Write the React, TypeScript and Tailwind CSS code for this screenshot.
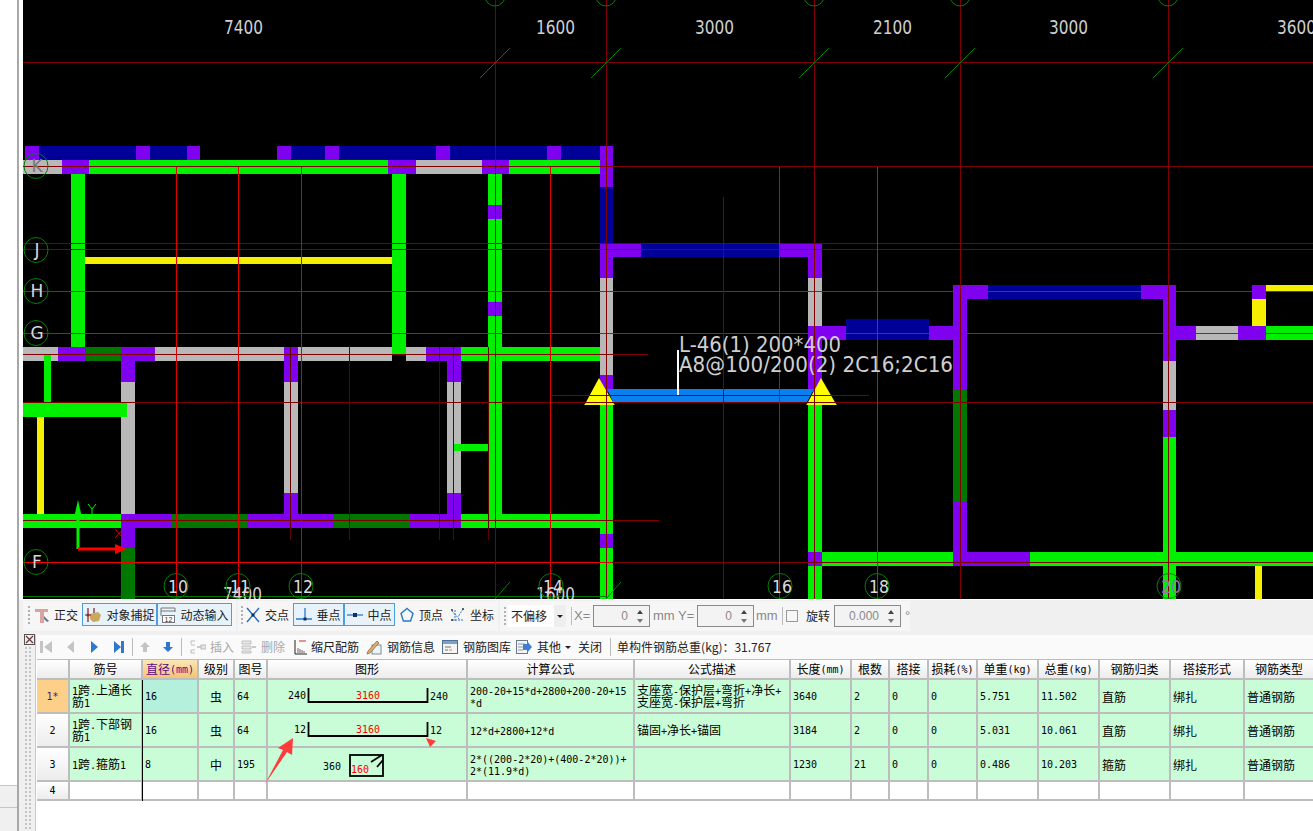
import type { ReactNode } from "react";

const G = "#00f000";
const P = "#8000f0";
const B = "#000099";
const S = "#b8b8b8";
const D = "#007800";
const Y = "#f5f000";

// x1, y1, x2, y2, colour, in page coordinates
const beams: [number, number, number, number, string][] = [
  // top blue strip
  [25, 146, 200, 160, B], [25, 146, 39, 160, P], [136, 146, 150, 160, P], [187, 146, 200, 160, P],
  [277, 146, 600, 160, B], [277, 146, 291, 160, P], [325, 146, 339, 160, P], [436, 146, 450, 160, P], [547, 146, 561, 160, P],
  // K row
  [23, 160, 62, 174, S], [62, 160, 89, 174, P], [89, 160, 388, 174, G], [388, 160, 416, 174, P],
  [416, 160, 482, 174, S], [482, 160, 509, 174, P], [509, 160, 600, 174, G],
  // left verticals
  [71, 174, 85, 347, G], [392, 174, 406, 354, G], [85, 257, 392, 264, Y],
  [488, 174, 502, 514, G], [488, 205, 502, 219, P], [488, 302, 502, 316, P],
  // G row
  [23, 347, 58, 361, S], [58, 347, 86, 361, P], [86, 347, 121, 361, D], [121, 347, 155, 361, P],
  [155, 347, 284, 361, S], [284, 347, 298, 361, P], [298, 347, 392, 361, S], [392, 347, 406, 354, G], [406, 347, 426, 361, S],
  [426, 347, 461, 361, P], [461, 347, 601, 361, G],
  [121, 361, 135, 382, P], [121, 382, 135, 514, S], [121, 528, 135, 548, P], [121, 548, 135, 599, D],
  [284, 361, 298, 382, P], [284, 382, 298, 493, S], [284, 493, 298, 514, P],
  [447, 361, 461, 382, P], [447, 382, 461, 493, S], [447, 493, 461, 514, P],
  [44, 355, 51, 402, G], [23, 403, 127, 417, G], [37, 417, 44, 514, Y], [454, 444, 488, 451, G],
  // F row
  [23, 514, 121, 528, G], [121, 514, 171, 528, P], [171, 514, 247, 528, D], [247, 514, 334, 528, P],
  [334, 514, 410, 528, D], [410, 514, 461, 528, P], [461, 514, 613, 528, G],
  // x=600 column
  [600, 146, 613, 187, P], [600, 187, 613, 243, B], [600, 243, 613, 278, P], [600, 278, 613, 375, S], [600, 375, 613, 392, P],
  [600, 402, 613, 534, G], [600, 534, 613, 548, P], [600, 548, 613, 599, G],
  // first box
  [613, 243, 641, 257, P], [641, 243, 779, 257, B], [779, 243, 822, 257, P],
  [808, 257, 822, 278, P], [808, 278, 822, 326, S], [808, 326, 846, 340, P], [846, 319, 929, 340, B], [929, 326, 953, 340, P],
  [808, 340, 822, 392, P], [808, 402, 822, 552, G], [808, 552, 822, 566, P], [808, 566, 822, 599, G],
  // second box
  [953, 285, 967, 390, P], [953, 390, 967, 502, D], [953, 502, 967, 566, P],
  [822, 552, 953, 566, G], [967, 552, 1030, 566, P], [1030, 552, 1313, 566, G],
  [967, 285, 988, 299, P], [988, 285, 1141, 299, B], [1141, 285, 1176, 299, P],
  [1163, 299, 1176, 361, P], [1163, 361, 1176, 410, S], [1163, 410, 1176, 437, P], [1163, 437, 1176, 552, G], [1163, 566, 1176, 599, G],
  [1176, 326, 1196, 340, P], [1196, 326, 1238, 340, S], [1238, 326, 1266, 340, P], [1266, 326, 1313, 340, G],
  [1252, 285, 1266, 299, P], [1252, 299, 1266, 326, Y], [1266, 285, 1313, 291, Y], [1255, 566, 1262, 599, Y],
];

const DARK = "#800000";
const RED = "#e00000";
// horizontal: y, x1, x2, colour
const hLines: [number, number, number, string][] = [
  [62, 23, 1313, DARK], [166, 23, 1313, DARK], [243, 23, 1313, DARK], [249, 23, 1313, DARK], [291, 23, 1313, RED],
  [333, 23, 1313, RED], [354, 23, 648, DARK], [395, 552, 869, DARK], [402, 23, 1313, DARK], [520, 23, 659, DARK],
  [562, 23, 612, "#f00000"], [562, 612, 1313, DARK],
];
// vertical: x, y1, y2, colour
const vLines: [number, number, number, string][] = [
  [495, 0, 599, DARK], [606, 0, 599, DARK], [814, 0, 599, DARK], [960, 0, 599, DARK], [1168, 0, 599, DARK],
  [176, 167, 599, RED], [238, 167, 599, RED], [301, 167, 599, RED], [550, 167, 599, RED],
  [723, 197, 599, DARK], [779, 167, 599, RED], [877, 167, 599, "#f00000"],
  [290, 347, 540, "#600000"], [349, 347, 540, "#600000"], [439, 347, 540, "#600000"], [453, 347, 540, "#600000"], [488, 347, 540, "#600000"],
];
const topAxes = [495, 606, 814, 960, 1168];
const dims: [string, number][] = [["7400", 244], ["1600", 556], ["3000", 715], ["2100", 893], ["3000", 1069], ["3600", 1297]];
const rowAxes: [string, number][] = [["K", 166], ["J", 250], ["H", 291], ["G", 333], ["F", 562]];
const colAxes: [string, number, number][] = [["10", 176, 178], ["11", 238, 240], ["12", 301, 303], ["14", 551, 553], ["16", 780, 782], ["18", 877, 879], ["20", 1169, 1171]];

const cadFont = "DejaVu Sans, sans-serif";

function CadLabel({ x, y, w, size = 19, fill = "#cfcfcf", children }: { x: number; y: number; w: number; size?: number; fill?: string; children: string }) {
  return (
    <text x={x} y={y} textLength={w} lengthAdjust="spacingAndGlyphs" fontFamily={cadFont} fontSize={size} fill={fill}>
      {children}
    </text>
  );
}

function CadView() {
  return (
    <svg viewBox="23 0 1290 599" width={1290} height={599} className="block bg-black">
      {beams.map(([x1, y1, x2, y2, c], i) => (
        <rect key={i} x={x1} y={y1} width={x2 - x1} height={y2 - y1} fill={c} />
      ))}
      <polygon points="607,389 814,389 807,402 613,402" fill="#0a80f0" />
      <polygon points="599,378 614,404 615,405 584,405 585,404" fill="#ffff00" />
      <polygon points="821,378 836,404 837,405 806,405 807,404" fill="#ffff00" />

      <g shapeRendering="crispEdges">
        {hLines.map(([y, x1, x2, c], i) => (
          <rect key={i} x={x1} y={y} width={x2 - x1} height={1} fill={c} />
        ))}
        {vLines.map(([x, y1, y2, c], i) => (
          <rect key={i} x={x} y={y1} width={1} height={y2 - y1} fill={c} />
        ))}
        <rect x={23} y={596} width={584} height={1} fill="#007800" />
      </g>

      {topAxes.map((x) => (
        <g key={x} fill="none" stroke="#008000">
          <line x1={x - 15} y1={78} x2={x + 15} y2={48} />
          <circle cx={x} cy={-4} r={10} />
        </g>
      ))}
      <g fill="none" stroke="#008000">
        <line x1={495} y1={599} x2={510} y2={582} />
        <line x1={606} y1={599} x2={621} y2={582} />
      </g>

      {dims.map(([t, x]) => (
        <CadLabel key={x} x={x - 20} y={34} w={39}>{t}</CadLabel>
      ))}
      <CadLabel x={223} y={601} w={39}>7400</CadLabel>
      <CadLabel x={536} y={601} w={39}>1600</CadLabel>

      {rowAxes.map(([t, y]) => (
        <g key={t}>
          <ellipse cx={36} cy={y} rx={12} ry={12.5} fill="none" stroke="#008000" />
          <text x={37} y={y + 6} textAnchor="middle" fontFamily={cadFont} fontSize={17} fill={t === "K" ? "#777777" : "#d8d8d8"}>{t}</text>
        </g>
      ))}
      {colAxes.map(([t, x, tx]) => (
        <g key={t}>
          <ellipse cx={x} cy={586} rx={12} ry={12.5} fill="none" stroke="#008000" />
          <CadLabel x={tx - 10} y={593} w={20} size={18} fill={t === "20" ? "#a070b0" : "#dddddd"}>{t}</CadLabel>
        </g>
      ))}

      {/* UCS marker */}
      <path d="M78 549V516" stroke="#00f000" strokeWidth={3} />
      <polygon points="78,500 82,518 74,518" fill="#00f000" />
      <path d="M88 504l4 5 4-5M92 509v6" stroke="#00f000" fill="none" />
      <path d="M78 549H116" stroke="#ff0000" strokeWidth={3} />
      <polygon points="127,549 115,544 115,554" fill="#ff0000" />
      <path d="M115 529l8 9m0-9l-8 9" stroke="#e00000" fill="none" />

      <CadLabel x={679} y={352} w={162} size={21}>L-46(1) 200*400</CadLabel>
      <CadLabel x={679} y={372} w={274} size={21}>A8@100/200(2) 2C16;2C16</CadLabel>
      <rect x={677} y={350} width={2} height={45} fill="#ffffff" />
    </svg>
  );
}

const Grip = ({ className = "" }: { className?: string }) => (
  <div className={`w-[4px] h-[20px] bg-[radial-gradient(#b0b0b0_1px,transparent_1px)] bg-[length:4px_4px] ${className}`} />
);

const Icon = ({ children, w = 16 }: { children: ReactNode; w?: number }) => (
  <svg viewBox={`0 0 ${w} 16`} width={w} height={16} className="shrink-0">
    {children}
  </svg>
);

const ortho = (
  <Icon>
    <path d="M1 2h13v3H10v11H6V5H1z" fill="#d9a3a3" />
    <path d="M10 9l5 5-2 1-3-3z" fill="#6b7a8c" />
  </Icon>
);
const snap = (
  <Icon w={18}>
    <path d="M6 7l8-2 3 3-2 6-6 1-3-3z" fill="#c9a860" />
    <path d="M4 1v14M10 1v5M1 8h6" stroke="#7a2020" strokeWidth={1.2} fill="none" />
    <circle cx={4} cy={8} r={1.5} fill="#a02020" />
  </Icon>
);
const dynamic = (
  <Icon>
    <path d="M1 1h14M1 4h14M1 1v8M15 1v4" stroke="#777777" fill="none" />
    <rect x={2.5} y={8.5} width={12} height={7} fill="#ffffff" stroke="#777777" />
    <text x={8.5} y={14.5} textAnchor="middle" fontSize={7} fontFamily="Liberation Sans, sans-serif" fill="#333333">12</text>
  </Icon>
);
const cross = (
  <Icon>
    <path d="M2 1l12 14M14 1L2 15" stroke="#1f6fc4" strokeWidth={1.4} />
    <rect x={6.5} y={6.5} width={3} height={3} fill="#10305f" />
  </Icon>
);
const perp = (
  <Icon>
    <path d="M0 12h16M9 1v11" stroke="#2a78c8" strokeWidth={1.3} />
    <rect x={7.5} y={10.5} width={3} height={3} fill="#10305f" />
  </Icon>
);
const mid = (
  <Icon>
    <path d="M0 8h16" stroke="#2a78c8" strokeWidth={1.3} />
    <rect x={6} y={6} width={4} height={4} fill="#10305f" />
  </Icon>
);
const vertex = (
  <Icon>
    <path d="M8 1.5l6 5-2.4 7.5H4.4L2 6.5z" fill="none" stroke="#2a78c8" strokeWidth={1.4} />
  </Icon>
);
const coord = (
  <Icon>
    <path d="M2 13h12M5 3v12M2 4l8 9M13 2l-5 8" stroke="#2a78c8" strokeDasharray="2 1" fill="none" />
    <circle cx={2} cy={3} r={1} fill="#333333" />
    <circle cx={13} cy={2} r={1} fill="#333333" />
    <circle cx={2} cy={13} r={1} fill="#333333" />
  </Icon>
);

function Tool({ icon, label, width, active, className = "" }: { icon: ReactNode; label: string; width: number; active?: boolean; className?: string }) {
  return (
    <div
      className={`h-[23px] flex items-center gap-[4px] text-[12px] text-[#222222] whitespace-nowrap ${active ? "justify-center gap-[3px] border border-[#4a9fe0] bg-[#e8f2fb]" : ""} ${className}`}
      style={{ width }}
    >
      {icon}
      <span>{label}</span>
    </div>
  );
}

function Spin({ value, className }: { value: string; className: string }) {
  return (
    <div className={`h-[22px] flex items-center justify-end border border-[#8a8a8a] bg-[#f3f3f3] text-[12px] text-[#8a8a8a] font-['Liberation_Sans',sans-serif] ${className}`}>
      <span>{value}</span>
      <span className="w-[18px] ml-[3px] flex flex-col items-center gap-[5px]">
        <span className="w-0 h-0 border-x-[3px] border-x-transparent border-b-[4px] border-b-[#444444]" />
        <span className="w-0 h-0 border-x-[3px] border-x-transparent border-t-[4px] border-t-[#777777]" />
      </span>
    </div>
  );
}

const Sep = ({ className = "" }: { className?: string }) => <div className={`w-px h-[18px] bg-[#bbbbbb] ${className}`} />;
const Dim = ({ children, className = "" }: { children: string; className?: string }) => (
  <span className={`text-[13px] text-[#888888] font-['Liberation_Sans',sans-serif] ${className}`}>{children}</span>
);

function SnapBar() {
  return (
    <div className="h-[35px] shrink-0 pt-px bg-[#f0f0f0] flex">
      <div className="ml-[4px] w-[213px] h-[30px] bg-[#f6f6f6] flex items-start pt-[2px]">
        <Grip className="ml-[4px] mt-[2px]" />
        <Tool icon={ortho} label="正交" width={44} className="ml-[3px]" />
        <Tool icon={snap} label="对象捕捉" width={75} active className="ml-[4px]" />
        <Tool icon={dynamic} label="动态输入" width={75} active />
      </div>
      <div className="ml-[2px] w-[260px] h-[30px] bg-[#f6f6f6] flex items-start pt-[2px]">
        <Grip className="ml-[2px] mt-[2px]" />
        <Tool icon={cross} label="交点" width={44} className="ml-px" />
        <Tool icon={perp} label="垂点" width={51} active className="ml-[4px]" />
        <Tool icon={mid} label="中点" width={51} active />
        <Tool icon={vertex} label="顶点" width={44} className="ml-[4px]" />
        <Tool icon={coord} label="坐标" width={44} className="ml-[7px]" />
      </div>
      <div className="ml-[2px] w-[410px] h-[30px] bg-[#f6f6f6] flex items-center [&>*]:shrink-0">
        <Grip className="ml-[3px]" />
        <div className="ml-[1px] w-[46px] h-[22px] bg-white text-[12px] text-[#222222] pl-[3px] leading-[22px]">不偏移</div>
        <div className="w-[12px] h-[22px] bg-[#eeeeee] flex items-center justify-center">
          <span className="w-0 h-0 border-x-[3px] border-x-transparent border-t-[3px] border-t-[#222222]" />
        </div>
        <Sep className="ml-[5px]" />
        <Dim className="ml-[2px] w-[19px]">X=</Dim>
        <Spin value="0" className="w-[57px]" />
        <Dim className="ml-[3px] w-[22px]">mm</Dim>
        <Dim className="ml-[3px] w-[19px]">Y=</Dim>
        <Spin value="0" className="w-[57px]" />
        <Dim className="ml-[2px] w-[24px]">mm</Dim>
        <Sep className="ml-[2px]" />
        <div className="ml-[3px] w-[12px] h-[12px] border border-[#999999] bg-[#f6f6f6]" />
        <span className="ml-[8px] w-[24px] text-[12px] text-[#222222] whitespace-nowrap">旋转</span>
        <Spin value="0.000" className="ml-[4px] w-[67px]" />
        <Dim className="ml-[4px]">°</Dim>
      </div>
    </div>
  );
}

const insertIcon = (
  <Icon>
    <path d="M1 2h4M1 2v3M1 6h4M1 11h4M1 11v3M1 14h4" stroke="#bbbbbb" fill="none" />
    <path d="M7 8h4" stroke="#999999" />
    <rect x={11} y={6} width={5} height={4} fill="#e4e4e4" stroke="#bbbbbb" />
  </Icon>
);
const deleteIcon = (
  <Icon>
    <path d="M1 2h9v3H1zM1 7h9v3H1zM1 12h9v2H1z" fill="#e8e8e8" stroke="#c0c0c0" />
    <path d="M11 8h4" stroke="#999999" />
  </Icon>
);
const scaleIcon = (
  <Icon w={13}>
    <path d="M1 1v14h12" stroke="#222222" fill="none" />
    <path d="M4 9v5M6 10v4M8 11v3M10 12v2" stroke="#666666" />
    <path d="M5 2h7" stroke="#c03030" />
  </Icon>
);
const infoIcon = (
  <Icon>
    <rect x={6} y={6} width={9} height={9} fill="#eef3f8" stroke="#7a8ca0" />
    <path d="M2 12L11 2l2 2-9 10-3 1z" fill="#d9b36a" stroke="#806030" strokeWidth={0.7} />
  </Icon>
);
const libraryIcon = (
  <Icon>
    <rect x={0.5} y={1.5} width={15} height={13} fill="#f4f4f4" stroke="#4f6f95" />
    <rect x={1} y={2} width={14} height={3} fill="#7f9fc4" />
    <path d="M3 8h6M3 11h3" stroke="#777777" />
    <path d="M7 11h3" stroke="#c09040" />
  </Icon>
);
const otherIcon = (
  <Icon>
    <rect x={0.5} y={1.5} width={11} height={13} fill="#f4f4f4" stroke="#6a7a8a" />
    <path d="M2 5h7M2 8h5M2 11h5" stroke="#8a9aaa" />
    <path d="M7 5h4V2l5 6-5 6v-3H7z" fill="#3f7fd0" />
  </Icon>
);
const navText = "text-[12px] text-[#222222]";
const navDisabled = "text-[12px] text-[#a8a8a8]";

function GridBar() {
  return (
    <div className="h-[24px] shrink-0 bg-[#fafafa] flex items-center">
      {/* first / prev / next / last */}
      <svg viewBox="0 0 96 16" width={96} height={16} className="ml-[4px] shrink-0">
        <path d="M0 2h3v12H0zM12 2v12L4 8z" fill="#c4c4c4" />
        <path d="M34 2v12l-7-6z" fill="#c4c4c4" />
        <path d="M51 2v12l7-6z" fill="#2f78d0" />
        <path d="M74 2v12l7-6zM81 2h3v12h-3z" fill="#2f78d0" />
      </svg>
      <Sep className="ml-[-4px]" />
      <svg viewBox="0 0 36 16" width={36} height={16} className="ml-[7px] shrink-0">
        <path d="M5 3l5 5H7v5H3V8H0z" fill="#c4c4c4" />
        <path d="M28 13l5-5h-3V3h-4v5h-3z" fill="#2f78d0" />
      </svg>
      <Sep className="ml-[5px]" />
      <div className="ml-[8px] w-[46px] flex items-center gap-[4px]">{insertIcon}<span className={navDisabled}>插入</span></div>
      <div className="ml-[5px] w-[46px] flex items-center gap-[4px]">{deleteIcon}<span className={navDisabled}>删除</span></div>
      <div className="ml-[7px] flex items-center gap-[4px]">{scaleIcon}<span className={navText}>缩尺配筋</span></div>
      <div className="ml-[7px] flex items-center gap-[5px]">{infoIcon}<span className={navText}>钢筋信息</span></div>
      <div className="ml-[7px] flex items-center gap-[5px]">{libraryIcon}<span className={navText}>钢筋图库</span></div>
      <div className="ml-[5px] flex items-center gap-[5px]">
        {otherIcon}
        <span className={navText}>其他</span>
        <span className="ml-[-1px] w-0 h-0 border-x-[3px] border-x-transparent border-t-[3px] border-t-[#222222]" />
      </div>
      <span className={`ml-[7px] ${navText}`}>关闭</span>
      <Sep className="ml-[8px]" />
      <span className="ml-[6px] text-[12px] text-[#222222] font-['Noto_Sans_CJK_SC',sans-serif]">单构件钢筋总重(kg)：31.767</span>
    </div>
  );
}

// latin runs are 6px wide in the reference, CJK runs 12px
function Mix({ text }: { text: string }) {
  return (
    <>
      {text.split(/([\u4e00-\u9fff]+)/).filter(Boolean).map((part, i) =>
        /[\u4e00-\u9fff]/.test(part) ? (
          <span key={i} className="text-[12px]">{part}</span>
        ) : (
          <span key={i} className="text-[10px] font-['DejaVu_Sans_Mono',monospace]">{part}</span>
        ),
      )}
    </>
  );
}

const headers = ["筋号", "直径(mm)", "级别", "图号", "图形", "计算公式", "公式描述", "长度(mm)", "根数", "搭接", "损耗(%)", "单重(kg)", "总重(kg)", "钢筋归类", "搭接形式", "钢筋类型"];

type Row = { no: string; name: string; dia: string; grade: string; fig: string; shape: number; formula: string; desc: string; rest: string[] };
const rows: Row[] = [
  { no: "1*", name: "1跨.上通长筋1", dia: "16", grade: "虫", fig: "64", shape: 0, formula: "200-20+15*d+2800+200-20+15\n*d", desc: "支座宽-保护层+弯折+净长+\n支座宽-保护层+弯折", rest: ["3640", "2", "0", "0", "5.751", "11.502", "直筋", "绑扎", "普通钢筋"] },
  { no: "2", name: "1跨.下部钢筋1", dia: "16", grade: "虫", fig: "64", shape: 1, formula: "12*d+2800+12*d", desc: "锚固+净长+锚固", rest: ["3184", "2", "0", "0", "5.031", "10.061", "直筋", "绑扎", "普通钢筋"] },
  { no: "3", name: "1跨.箍筋1", dia: "8", grade: "中", fig: "195", shape: 2, formula: "2*((200-2*20)+(400-2*20))+\n2*(11.9*d)", desc: "", rest: ["1230", "21", "0", "0", "0.486", "10.203", "箍筋", "绑扎", "普通钢筋"] },
];

const line = "border-r-2 border-b-2 border-[#bdbdbd]";
const headCell = `${line} bg-linear-to-b from-white to-[#ececec] flex items-center justify-center whitespace-nowrap text-[12px]`;
const cell = `${line} bg-[#c9fdd7] flex items-center px-[2px] pt-px text-[12px] leading-[10px] whitespace-pre-wrap break-all`;
const blank = `${line} bg-white`;

function Shape({ kind }: { kind: number }) {
  const mono = "DejaVu Sans Mono, monospace";
  if (kind === 2) {
    return (
      <svg viewBox="0 0 200 32" width={200} height={32} className="block">
        <text x={55} y={22} fontFamily={mono} fontSize={10} fill="#000000">360</text>
        <rect x={82} y={7} width={33} height={21} fill="none" stroke="#000000" strokeWidth={1.8} />
        <path d="M103 14L114 7M109 19L115 12" stroke="#000000" strokeWidth={1.8} />
        <text x={83} y={25} fontFamily={mono} fontSize={10} fill="#ff0000">160</text>
      </svg>
    );
  }
  const label = kind === 0 ? "240" : "12";
  return (
    <svg viewBox="0 0 200 32" width={200} height={32} className="block">
      <text x={38} y={19} textAnchor="end" fontFamily={mono} fontSize={10} fill="#000000">{label}</text>
      <path d="M40.5 8v14H159.5V8" fill="none" stroke="#000000" strokeWidth={1.8} />
      <text x={100} y={19} textAnchor="middle" fontFamily={mono} fontSize={10} fill="#ff0000">3160</text>
      <text x={162} y={20} fontFamily={mono} fontSize={10} fill="#000000">{label}</text>
    </svg>
  );
}

function RebarTable() {
  return (
    <div className="relative ml-px grid grid-cols-[33px_73px_56px_36px_33px_200px_167px_156px_61px_38px_39px_49px_61px_61px_71px_74px_70px] grid-rows-[20px_34px_34px_34px_19px] border-t border-[#bdbdbd] text-black">
      <div className={headCell} />
      {headers.map((h, i) => (
        <div key={h} className={i === 1 ? `${line} bg-linear-to-b from-[#fbe6b8] to-[#f3c373] flex items-center justify-center whitespace-nowrap text-[12px] text-[#5a0a80]` : headCell}>
          <Mix text={h} />
        </div>
      ))}
      {rows.map((r, ri) => (
        <div key={r.no} className="contents">
          <div className={ri === 0 ? `${line} bg-[#fdd08a] flex items-center justify-center text-[12px] text-[#5a0a80]` : headCell}>
            <Mix text={r.no} />
          </div>
          <div className={cell}><div><Mix text={r.name} /></div></div>
          <div className={ri === 0 ? `${line} bg-[#b4f0dc] flex items-center px-[2px] pt-px text-[12px]` : cell}><Mix text={r.dia} /></div>
          <div className={`${cell} justify-center`}>{r.grade}</div>
          <div className={cell}><Mix text={r.fig} /></div>
          <div className={`${line} bg-[#c9fdd7]`}><Shape kind={r.shape} /></div>
          <div className={cell}><div><Mix text={r.formula} /></div></div>
          <div className={cell}><div><Mix text={r.desc} /></div></div>
          {r.rest.map((v, i) => (
            <div key={i} className={cell}><Mix text={v} /></div>
          ))}
        </div>
      ))}
      <div className={headCell}><Mix text="4" /></div>
      {Array.from({ length: 16 }).map((_, i) => (
        <div key={i} className={blank} />
      ))}
      {/* frozen column edge */}
      <div className="absolute left-[105px] top-[20px] w-px h-[121px] bg-black" />
    </div>
  );
}

// hand-drawn markup on top of the screenshot
const Markup = () => (
  <svg viewBox="0 0 60 60" width={60} height={60} className="absolute left-[-3px] top-[76px]">
    <polygon points="3,48 21,14 16,12 31,2 30,19 25,16" fill="#ff3b3b" />
  </svg>
);

export default function App() {
  return (
    <div className="w-[1313px] h-[831px] overflow-hidden flex bg-white font-['Noto_Sans_CJK_SC','Liberation_Sans',sans-serif]">
      <div className="w-[19px] shrink-0 flex flex-col border-r-2 border-[#a8a8a8]">
        <div className="flex-1" />
        <div className="h-[23px] bg-[#f0f0f0] border-y border-[#c4c4c4]" />
        <div className="h-[23px] bg-[#f0f0f0]" />
      </div>
      <div className="flex-1 min-w-0 flex flex-col">
        <div className="h-[600px] shrink-0 pl-[4px]">
          <CadView />
        </div>
        <SnapBar />
        <div className="flex-1 flex min-h-0">
          <div className="w-[17px] shrink-0 bg-[#f0f0f0] border-r border-[#c8c8c8] flex flex-col items-start pl-[5px]">
            <svg viewBox="0 0 11 11" width={11} height={11} className="mt-[-1px] shrink-0">
              <rect x={0.5} y={0.5} width={10} height={10} fill="#eeeeee" stroke="#555555" />
              <path d="M2 2l7 7M9 2l-7 7" stroke="#6a3a3a" strokeWidth={1.3} />
            </svg>
            <div className="mt-[1px] w-[8px] flex-1 bg-[radial-gradient(#c4c4c4_1px,transparent_1px)] bg-[length:4px_4px]" />
          </div>
          <div className="relative flex-1 min-w-0 flex flex-col">
            <GridBar />
            <RebarTable />
            <svg viewBox="0 0 12 10" width={12} height={10} className="absolute left-[389px] top-[103px]">
              <polygon points="1,0 11,3 5,9" fill="#ff3b3b" />
            </svg>
            <div className="absolute left-[229px] top-[25px]"><Markup /></div>
          </div>
        </div>
      </div>
    </div>
  );
}
